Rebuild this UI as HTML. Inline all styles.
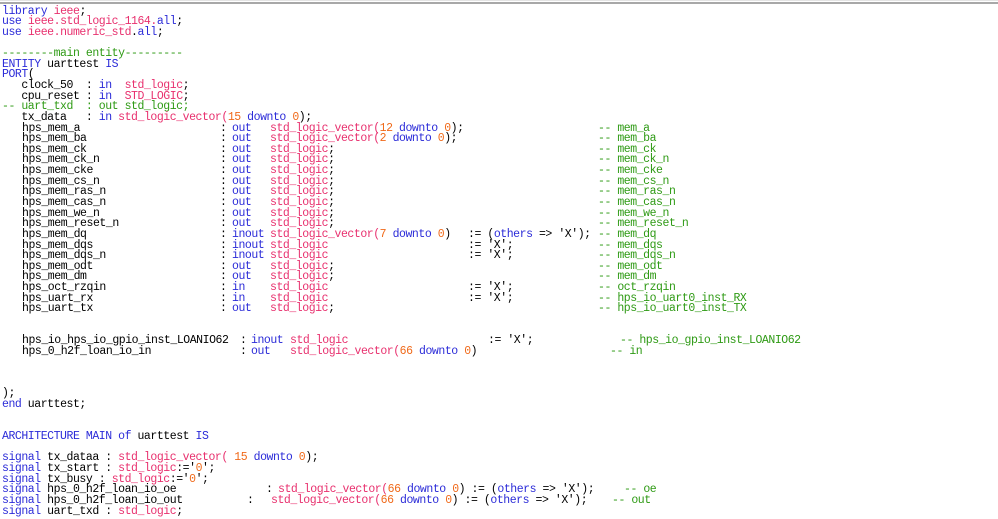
<!DOCTYPE html>
<html><head><meta charset="utf-8"><style>
html,body{margin:0;padding:0;background:#fff;width:998px;height:516px;overflow:hidden}
#top{position:absolute;left:0;top:2px;width:998px;height:2px;background:#a8a8a8}
#top2{position:absolute;left:0;top:0;width:998px;height:1px;background:#e4e4e4}
#w{position:absolute;left:0;top:3px;width:998px;height:516px}
.l{position:absolute;left:0;height:11px;width:998px;font-family:"Liberation Mono",monospace;font-size:11.5px;letter-spacing:-0.45px;line-height:11px;white-space:pre;color:#000}
.l span{position:absolute;top:0}
.k{color:#2b2bd8}.p{color:#e8306e}.o{color:#f06a1a}.g{color:#2e9a14}
</style></head><body>
<div id="top2"></div><div id="top"></div>
<div id="w">
<div class="l" style="top:2.5px"><span style="left:2px"><span class="k" style="position:static">library</span> <span class="p" style="position:static">ieee</span>;</span></div>
<div class="l" style="top:13.1px"><span style="left:2px"><span class="k" style="position:static">use</span> <span class="p" style="position:static">ieee.std_logic_1164.</span><span class="k" style="position:static">all</span>;</span></div>
<div class="l" style="top:23.8px"><span style="left:2px"><span class="k" style="position:static">use</span> <span class="p" style="position:static">ieee.numeric_std</span>.<span class="k" style="position:static">all</span>;</span></div>
<div class="l" style="top:45.1px"><span class="g" style="left:2px">--------main entity---------</span></div>
<div class="l" style="top:55.7px"><span style="left:2px"><span class="k" style="position:static">ENTITY</span> uarttest <span class="k" style="position:static">IS</span></span></div>
<div class="l" style="top:66.4px"><span style="left:2px"><span class="k" style="position:static">PORT</span>(</span></div>
<div class="l" style="top:77px"><span style="left:2px">   clock_50  : <span class="k" style="position:static">in</span>  <span class="p" style="position:static">std_logic</span>;</span></div>
<div class="l" style="top:87.6px"><span style="left:2px">   cpu_reset : <span class="k" style="position:static">in</span>  <span class="p" style="position:static">STD_LOGIC</span>;</span></div>
<div class="l" style="top:98.3px"><span class="g" style="left:2px">-- uart_txd  : out std_logic;</span></div>
<div class="l" style="top:108.9px"><span style="left:2px">   tx_data   : <span class="k" style="position:static">in</span> <span class="p" style="position:static">std_logic_vector(</span><span class="o" style="position:static">15</span> <span class="k" style="position:static">downto</span> <span class="o" style="position:static">0</span>);</span></div>

<div class="l" style="top:119.5px"><span style="left:22px">hps_mem_a</span><span style="left:220px">:</span><span class="k" style="left:232px">out</span><span style="left:270px"><span class="p" style="position:static">std_logic_vector(</span><span class="o" style="position:static">12</span> <span class="k" style="position:static">downto</span> <span class="o" style="position:static">0</span>);</span><span class="g" style="left:598px">-- mem_a</span></div>
<div class="l" style="top:130.2px"><span style="left:22px">hps_mem_ba</span><span style="left:220px">:</span><span class="k" style="left:232px">out</span><span style="left:270px"><span class="p" style="position:static">std_logic_vector(</span><span class="o" style="position:static">2</span> <span class="k" style="position:static">downto</span> <span class="o" style="position:static">0</span>);</span><span class="g" style="left:598px">-- mem_ba</span></div>
<div class="l" style="top:140.8px"><span style="left:22px">hps_mem_ck</span><span style="left:220px">:</span><span class="k" style="left:232px">out</span><span style="left:270px"><span class="p" style="position:static">std_logic</span>;</span><span class="g" style="left:598px">-- mem_ck</span></div>
<div class="l" style="top:151.4px"><span style="left:22px">hps_mem_ck_n</span><span style="left:220px">:</span><span class="k" style="left:232px">out</span><span style="left:270px"><span class="p" style="position:static">std_logic</span>;</span><span class="g" style="left:598px">-- mem_ck_n</span></div>
<div class="l" style="top:162.1px"><span style="left:22px">hps_mem_cke</span><span style="left:220px">:</span><span class="k" style="left:232px">out</span><span style="left:270px"><span class="p" style="position:static">std_logic</span>;</span><span class="g" style="left:598px">-- mem_cke</span></div>
<div class="l" style="top:172.7px"><span style="left:22px">hps_mem_cs_n</span><span style="left:220px">:</span><span class="k" style="left:232px">out</span><span style="left:270px"><span class="p" style="position:static">std_logic</span>;</span><span class="g" style="left:598px">-- mem_cs_n</span></div>
<div class="l" style="top:183.3px"><span style="left:22px">hps_mem_ras_n</span><span style="left:220px">:</span><span class="k" style="left:232px">out</span><span style="left:270px"><span class="p" style="position:static">std_logic</span>;</span><span class="g" style="left:598px">-- mem_ras_n</span></div>
<div class="l" style="top:194px"><span style="left:22px">hps_mem_cas_n</span><span style="left:220px">:</span><span class="k" style="left:232px">out</span><span style="left:270px"><span class="p" style="position:static">std_logic</span>;</span><span class="g" style="left:598px">-- mem_cas_n</span></div>
<div class="l" style="top:204.6px"><span style="left:22px">hps_mem_we_n</span><span style="left:220px">:</span><span class="k" style="left:232px">out</span><span style="left:270px"><span class="p" style="position:static">std_logic</span>;</span><span class="g" style="left:598px">-- mem_we_n</span></div>
<div class="l" style="top:215.2px"><span style="left:22px">hps_mem_reset_n</span><span style="left:220px">:</span><span class="k" style="left:232px">out</span><span style="left:270px"><span class="p" style="position:static">std_logic</span>;</span><span class="g" style="left:598px">-- mem_reset_n</span></div>
<div class="l" style="top:225.9px"><span style="left:22px">hps_mem_dq</span><span style="left:220px">:</span><span class="k" style="left:232px">inout</span><span style="left:270px"><span class="p" style="position:static">std_logic_vector(</span><span class="o" style="position:static">7</span> <span class="k" style="position:static">downto</span> <span class="o" style="position:static">0</span>)</span><span style="left:468px">:= (<span class="k" style="position:static">others</span> =&gt; 'X');</span><span class="g" style="left:598px">-- mem_dq</span></div>
<div class="l" style="top:236.5px"><span style="left:22px">hps_mem_dqs</span><span style="left:220px">:</span><span class="k" style="left:232px">inout</span><span class="p" style="left:270px">std_logic</span><span style="left:468px">:= 'X';</span><span class="g" style="left:598px">-- mem_dqs</span></div>
<div class="l" style="top:247.1px"><span style="left:22px">hps_mem_dqs_n</span><span style="left:220px">:</span><span class="k" style="left:232px">inout</span><span class="p" style="left:270px">std_logic</span><span style="left:468px">:= 'X';</span><span class="g" style="left:598px">-- mem_dqs_n</span></div>
<div class="l" style="top:257.8px"><span style="left:22px">hps_mem_odt</span><span style="left:220px">:</span><span class="k" style="left:232px">out</span><span style="left:270px"><span class="p" style="position:static">std_logic</span>;</span><span class="g" style="left:598px">-- mem_odt</span></div>
<div class="l" style="top:268.4px"><span style="left:22px">hps_mem_dm</span><span style="left:220px">:</span><span class="k" style="left:232px">out</span><span style="left:270px"><span class="p" style="position:static">std_logic</span>;</span><span class="g" style="left:598px">-- mem_dm</span></div>
<div class="l" style="top:279px"><span style="left:22px">hps_oct_rzqin</span><span style="left:220px">:</span><span class="k" style="left:232px">in</span><span class="p" style="left:270px">std_logic</span><span style="left:468px">:= 'X';</span><span class="g" style="left:598px">-- oct_rzqin</span></div>
<div class="l" style="top:289.7px"><span style="left:22px">hps_uart_rx</span><span style="left:220px">:</span><span class="k" style="left:232px">in</span><span class="p" style="left:270px">std_logic</span><span style="left:468px">:= 'X';</span><span class="g" style="left:598px">-- hps_io_uart0_inst_RX</span></div>
<div class="l" style="top:300.3px"><span style="left:22px">hps_uart_tx</span><span style="left:220px">:</span><span class="k" style="left:232px">out</span><span style="left:270px"><span class="p" style="position:static">std_logic</span>;</span><span class="g" style="left:598px">-- hps_io_uart0_inst_TX</span></div>

<div class="l" style="top:332.2px"><span style="left:22px">hps_io_hps_io_gpio_inst_LOANIO62</span><span style="left:240px">:</span><span class="k" style="left:251px">inout</span><span class="p" style="left:290px">std_logic</span><span style="left:488px">:= 'X';</span><span class="g" style="left:620px">-- hps_io_gpio_inst_LOANIO62</span></div>
<div class="l" style="top:342.8px"><span style="left:22px">hps_0_h2f_loan_io_in</span><span style="left:240px">:</span><span class="k" style="left:251px">out</span><span style="left:290px"><span class="p" style="position:static">std_logic_vector(</span><span class="o" style="position:static">66</span> <span class="k" style="position:static">downto</span> <span class="o" style="position:static">0</span>)</span><span class="g" style="left:610px">-- in</span></div>

<div class="l" style="top:385.4px"><span style="left:2px">);</span></div>
<div class="l" style="top:396px"><span style="left:2px"><span class="k" style="position:static">end</span> uarttest;</span></div>

<div class="l" style="top:428.1px"><span style="left:2px"><span class="k" style="position:static">ARCHITECTURE MAIN of</span> uarttest <span class="k" style="position:static">IS</span></span></div>
<div class="l" style="top:449.4px"><span style="left:2px"><span class="k" style="position:static">signal</span> tx_dataa : <span class="p" style="position:static">std_logic_vector(</span> <span class="o" style="position:static">15</span> <span class="k" style="position:static">downto</span> <span class="o" style="position:static">0</span>);</span></div>
<div class="l" style="top:460px"><span style="left:2px"><span class="k" style="position:static">signal</span> tx_start : <span class="p" style="position:static">std_logic</span>:='<span class="o" style="position:static">0</span>';</span></div>
<div class="l" style="top:470.6px"><span style="left:2px"><span class="k" style="position:static">signal</span> tx_busy : <span class="p" style="position:static">std_logic</span>:='<span class="o" style="position:static">0</span>';</span></div>
<div class="l" style="top:481.3px"><span style="left:2px"><span class="k" style="position:static">signal</span> hps_0_h2f_loan_io_oe</span><span style="left:266px">:</span><span style="left:278px"><span class="p" style="position:static">std_logic_vector(</span><span class="o" style="position:static">66</span> <span class="k" style="position:static">downto</span> <span class="o" style="position:static">0</span>) := (<span class="k" style="position:static">others</span> =&gt; 'X');</span><span class="g" style="left:624px">-- oe</span></div>
<div class="l" style="top:491.9px"><span style="left:2px"><span class="k" style="position:static">signal</span> hps_0_h2f_loan_io_out</span><span style="left:247px">:</span><span style="left:271px"><span class="p" style="position:static">std_logic_vector(</span><span class="o" style="position:static">66</span> <span class="k" style="position:static">downto</span> <span class="o" style="position:static">0</span>) := (<span class="k" style="position:static">others</span> =&gt; 'X');</span><span class="g" style="left:612px">-- out</span></div>
<div class="l" style="top:502.5px"><span style="left:2px"><span class="k" style="position:static">signal</span> uart_txd : <span class="p" style="position:static">std_logic</span>;</span></div>
</div>
</body></html>
